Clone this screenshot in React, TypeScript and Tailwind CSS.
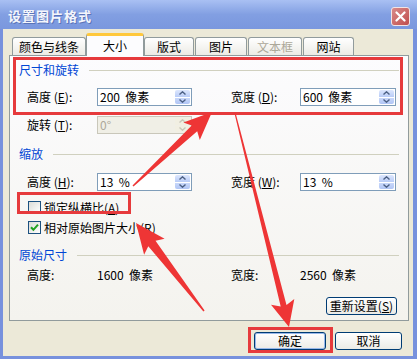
import React from "react";

function arrowPts(x1: number, y1: number, x2: number, y2: number, w0: number, w1: number, L: number, H: number) {
  const dx = x2 - x1, dy = y2 - y1;
  const len = Math.hypot(dx, dy);
  const ux = dx / len, uy = dy / len;
  const nx = -uy, ny = ux;
  const bx = x2 - ux * L, by = y2 - uy * L;
  const gx = bx - ux * 4, gy = by - uy * 4;
  const p = [
    [x1 + (nx * w0) / 2, y1 + (ny * w0) / 2],
    [bx + (nx * w1) / 2, by + (ny * w1) / 2],
    [gx + nx * H, gy + ny * H],
    [x2, y2],
    [gx - nx * H, gy - ny * H],
    [bx - (nx * w1) / 2, by - (ny * w1) / 2],
    [x1 - (nx * w0) / 2, y1 - (ny * w0) / 2],
  ];
  return p.map((q) => q.map((v) => v.toFixed(1)).join(",")).join(" ");
}

function Chevron({ up, disabled }: { up?: boolean; disabled?: boolean }) {
  return (
    <svg width="7" height="4" viewBox="0 0 7 4">
      <polyline
        points={up ? "0.5,3.5 3.5,0.8 6.5,3.5" : "0.5,0.5 3.5,3.2 6.5,0.5"}
        fill="none"
        stroke={disabled ? "#c9c7ba" : "#4d6185"}
        strokeWidth="1.4"
      />
    </svg>
  );
}

function Spin({ disabled }: { disabled?: boolean }) {
  return (
    <div className="flex h-full w-[16px] flex-col gap-[1px] py-[1px] pr-[1px]">
      <div
        className={`flex flex-1 items-center justify-center rounded-t-[2px] ${
          disabled ? "bg-[#f1efe2]" : "bg-gradient-to-b from-[#dde7fd] to-[#b9ccf7]"
        }`}
      >
        <Chevron up disabled={disabled} />
      </div>
      <div
        className={`flex flex-1 items-center justify-center rounded-b-[2px] ${
          disabled ? "bg-[#f1efe2]" : "bg-gradient-to-b from-[#c9d8fa] to-[#b0c5f5]"
        }`}
      >
        <Chevron disabled={disabled} />
      </div>
    </div>
  );
}

function Field({ value, disabled, w }: { value: string; disabled?: boolean; w: string }) {
  return (
    <div
      className={`${w} flex h-[18px] items-center border ${
        disabled ? "border-[#c9c7ba] bg-[#f0efe6] text-[#aca899]" : "border-[#7f9db9] bg-white text-black"
      }`}
    >
      <span className="flex-1 whitespace-pre pl-[2px] text-[12px] leading-none">{value}</span>
      <Spin disabled={disabled} />
    </div>
  );
}

function Header({ title }: { title: string }) {
  return (
    <div className="flex h-[16px] items-center pl-[9px] pr-[9px]">
      <span className="text-[12px] leading-none text-[#0046d5]">{title}</span>
      <div className="ml-[10px] h-[1px] flex-1 bg-[#d0d0bf]" />
    </div>
  );
}

function Label({ children, w }: { children: React.ReactNode; w: string }) {
  return <span className={`${w} whitespace-pre text-[12px] leading-none text-black`}>{children}</span>;
}

function Check({ checked }: { checked?: boolean }) {
  return (
    <div className="flex h-[13px] w-[13px] items-center justify-center border border-[#1c5180] bg-gradient-to-br from-[#dcdcd7] to-white">
      {checked && (
        <svg width="9" height="9" viewBox="0 0 9 9">
          <polyline points="1,4.2 3.4,6.8 8,1.6" fill="none" stroke="#21a121" strokeWidth="2" />
        </svg>
      )}
    </div>
  );
}

function XPButton({ children, w, def }: { children: React.ReactNode; w: string; def?: boolean }) {
  return (
    <div
      className={`${w} flex h-[18px] items-center justify-center rounded-[3px] border border-[#003c74] bg-gradient-to-b from-white to-[#ecebe6] text-[12px] leading-none text-black ${
        def ? "shadow-[inset_0_0_0_1px_#98b8ea]" : ""
      }`}
    >
      {children}
    </div>
  );
}

export default function App() {
  const tabs = [
    { t: "颜色与线条", w: "w-[74px]" },
    { t: "大小", w: "w-[58px]", sel: true },
    { t: "版式", w: "w-[50px]" },
    { t: "图片", w: "w-[52px] ml-[1px]" },
    { t: "文本框", w: "w-[54px] ml-[1px]", dis: true },
    { t: "网站", w: "w-[51px] ml-[1px]" },
  ];
  return (
    <div className="relative h-[359px] w-[417px] overflow-hidden font-['Noto_Sans_CJK_SC','Noto_Sans',sans-serif]">
      <div className="flex h-full w-full flex-col rounded-t-[6px] bg-[#7791dd]">
        {/* title bar */}
        <div className="flex h-[29px] items-center justify-between bg-gradient-to-b from-[#a9c0f3] via-[#829fe2] to-[#7a97de] pl-[8px] pr-[7px]">
          <span className="pt-[1px] text-[13px] font-bold leading-none tracking-[1px] text-[#f4f6fc] [text-shadow:1px_1px_0_#5b74b8]">
            设置图片格式
          </span>
          <div className="mt-[3px] flex h-[19px] w-[19px] items-center justify-center rounded-[3px] border border-[#f2e4e4] bg-gradient-to-br from-[#d88a8a] to-[#c04c4c]">
            <svg width="11" height="11" viewBox="0 0 11 11">
              <path d="M1.5 1.5 L9.5 9.5 M9.5 1.5 L1.5 9.5" stroke="white" strokeWidth="2.2" strokeLinecap="round" />
            </svg>
          </div>
        </div>
        {/* body */}
        <div className="mb-[3px] ml-[3px] mr-[4px] flex flex-1 flex-col bg-[#ece9d8] pl-[6px] pr-[4px] pt-[4px]">
          {/* tabs */}
          <div className="flex h-[22px] items-end pl-[3px]">
            {tabs.map((tb) =>
              tb.sel ? (
                <div
                  key={tb.t}
                  className={`${tb.w} relative z-10 -mb-[1px] flex h-[23px] items-center justify-center rounded-t-[3px] border-x border-t-[3px] border-x-[#919b9c] border-t-[#ffc83c] bg-[#fcfcfe] text-[12px] leading-none text-black`}
                >
                  {tb.t}
                </div>
              ) : (
                <div
                  key={tb.t}
                  className={`${tb.w} flex h-[18px] items-center justify-center rounded-t-[3px] border-x border-t border-[#919b9c] bg-gradient-to-b from-white to-[#ecebe5] text-[12px] leading-none ${
                    tb.dis ? "text-[#aca899]" : "text-black"
                  }`}
                >
                  {tb.t}
                </div>
              )
            )}
          </div>
          {/* panel */}
          <div className="flex h-[266px] w-[400px] flex-col border border-[#919b9c] bg-gradient-to-b from-[#fcfcfe] to-[#f4f3ee]">
            <div className="mt-[6px]">
              <Header title="尺寸和旋转" />
            </div>
            <div className="mt-[10px] flex h-[18px] items-center pl-[17px]">
              <Label w="w-[70px]">
                高度 (<u>E</u>):
              </Label>
              <Field value="200  像素" w="w-[95px]" />
              <span className="w-[39px]" />
              <Label w="w-[69px]">
                宽度 (<u>D</u>):
              </Label>
              <Field value="600  像素" w="w-[96px]" />
            </div>
            <div className="mt-[10px] flex h-[18px] items-center pl-[17px]">
              <Label w="w-[70px]">
                旋转 (<u>T</u>):
              </Label>
              <Field value="0°" disabled w="w-[95px]" />
            </div>
            <div className="mt-[12px]">
              <Header title="缩放" />
            </div>
            <div className="mt-[11px] flex h-[18px] items-center pl-[17px]">
              <Label w="w-[70px]">
                高度 (<u>H</u>):
              </Label>
              <Field value="13  %" w="w-[95px]" />
              <span className="w-[39px]" />
              <Label w="w-[69px]">
                宽度 (<u>W</u>):
              </Label>
              <Field value="13  %" w="w-[96px]" />
            </div>
            <div className="mt-[10px] flex h-[13px] items-center gap-[3px] pl-[18px]">
              <Check />
              <span className="text-[12px] leading-none text-black">
                锁定纵横比(<u>A</u>)
              </span>
            </div>
            <div className="mt-[7px] flex h-[13px] items-center gap-[3px] pl-[18px]">
              <Check checked />
              <span className="text-[12px] leading-none text-black">
                相对原始图片大小(<u>R</u>)
              </span>
            </div>
            <div className="mt-[13px]">
              <Header title="原始尺寸" />
            </div>
            <div className="mt-[4px] flex h-[16px] items-center pl-[17px]">
              <Label w="w-[70px]">高度:</Label>
              <span className="w-[134px] whitespace-pre text-[12px] leading-none text-black">1600  像素</span>
              <Label w="w-[69px]">宽度:</Label>
              <span className="whitespace-pre text-[12px] leading-none text-black">2560  像素</span>
            </div>
            <div className="mt-[14px] flex justify-end pr-[11px]">
              <XPButton w="w-[71px]">
                重新设置(<u>S</u>)
              </XPButton>
            </div>
          </div>
          {/* bottom buttons */}
          <div className="mt-[11px] flex justify-end gap-[9px] pr-[7px]">
            <XPButton w="w-[72px]" def>
              确定
            </XPButton>
            <XPButton w="w-[67px]">取消</XPButton>
          </div>
        </div>
      </div>

      {/* red highlight boxes */}
      <div className="pointer-events-none absolute left-[13px] top-[57px] h-[58px] w-[390px] border-[3px] border-[#e63a3c]" />
      <div className="pointer-events-none absolute left-[17px] top-[192px] h-[22px] w-[114px] border-[3px] border-[#e63a3c]" />
      <div className="pointer-events-none absolute left-[248px] top-[327px] h-[26px] w-[85px] border-[3px] border-[#e63a3c]" />

      {/* arrows */}
      <svg className="pointer-events-none absolute left-0 top-0" width="417" height="359" viewBox="0 0 417 359">
        <polygon points={arrowPts(133, 186, 212, 112, 1.5, 8, 24, 12)} fill="#ee3535" />
        <polygon points={arrowPts(204, 311, 136, 223, 1.5, 9, 26, 13)} fill="#ee3535" />
        <polygon points={arrowPts(235, 113, 289, 327, 1.2, 6, 22, 12)} fill="#ee3535" />
      </svg>
    </div>
  );
}
